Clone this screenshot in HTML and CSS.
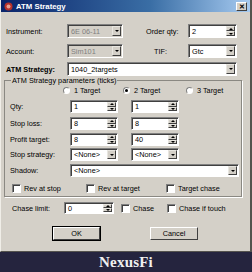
FILE: index.html
```html
<!DOCTYPE html>
<html><head><meta charset="utf-8"><link rel="stylesheet" href="styles.css"></head>
<body>
<div class="window">
  <div class="titlebar">
    <svg class="appicon" width="9" height="9" viewBox="0 0 9 9"><circle cx="4.5" cy="4.5" r="4" fill="#b8322a"/><circle cx="4.5" cy="4.5" r="2" fill="#e8a090"/></svg>
    <span class="title">ATM Strategy</span>
    <span class="close">✕</span>
  </div>
  <div class="row r1">
    <span class="lbl">Instrument:</span>
    <div class="combo dis w56"><span class="val">6E 06-11</span><span class="btn"><i class="down"></i></span></div>
    <span class="lbl2">Order qty:</span>
    <div class="spin w49"><span class="val">2</span><span class="sbtn"><span class="half"><i class="up"></i></span><span class="half"><i class="down"></i></span></span></div>
  </div>
  <div class="row r2">
    <span class="lbl">Account:</span>
    <div class="combo dis w56"><span class="val">Sim101</span><span class="btn"><i class="down"></i></span></div>
    <span class="lbl2 tif">TIF:</span>
    <div class="combo w49"><span class="val">Gtc</span><span class="btn"><i class="down"></i></span></div>
  </div>
  <div class="row r3">
    <span class="lbl bold">ATM Strategy:</span>
    <div class="combo w170"><span class="val">1040_2targets</span><span class="btn"><i class="down"></i></span></div>
  </div>
  <fieldset class="group">
    <legend>ATM Strategy parameters (ticks)</legend>
    <div class="row radios">
      <span class="radio rd1"><i class="circ"></i>1 Target</span>
      <span class="radio rd2"><i class="circ on"></i>2 Target</span>
      <span class="radio rd3"><i class="circ"></i>3 Target</span>
    </div>
    <div class="row prow m5">
      <span class="flbl">Qty:</span>
      <div class="spin w48"><span class="val">1</span><span class="sbtn"><span class="half"><i class="up"></i></span><span class="half"><i class="down"></i></span></span></div>
      <div class="spin w48 col2"><span class="val">1</span><span class="sbtn"><span class="half"><i class="up"></i></span><span class="half"><i class="down"></i></span></span></div>
    </div>
    <div class="row prow m4">
      <span class="flbl">Stop loss:</span>
      <div class="spin w48"><span class="val">8</span><span class="sbtn"><span class="half"><i class="up"></i></span><span class="half"><i class="down"></i></span></span></div>
      <div class="spin w48 col2"><span class="val">8</span><span class="sbtn"><span class="half"><i class="up"></i></span><span class="half"><i class="down"></i></span></span></div>
    </div>
    <div class="row prow m3">
      <span class="flbl">Profit target:</span>
      <div class="spin w48"><span class="val">8</span><span class="sbtn"><span class="half"><i class="up"></i></span><span class="half"><i class="down"></i></span></span></div>
      <div class="spin w48 col2"><span class="val">40</span><span class="sbtn"><span class="half"><i class="up"></i></span><span class="half"><i class="down"></i></span></span></div>
    </div>
    <div class="row prow m2">
      <span class="flbl">Stop strategy:</span>
      <div class="combo w48"><span class="val">&lt;None&gt;</span><span class="btn"><i class="down"></i></span></div>
      <div class="combo w48 col2"><span class="val">&lt;None&gt;</span><span class="btn"><i class="down"></i></span></div>
    </div>
    <div class="row prow m3">
      <span class="flbl">Shadow:</span>
      <div class="combo w169"><span class="val">&lt;None&gt;</span><span class="btn"><i class="down"></i></span></div>
    </div>
    <div class="row checks">
      <span class="check c1"><i class="box"></i>Rev at stop</span>
      <span class="check c2"><i class="box"></i>Rev at target</span>
      <span class="check c3"><i class="box"></i>Target chase</span>
    </div>
  </fieldset>
  <div class="row chase">
    <span class="clbl">Chase limit:</span>
    <div class="spin w50"><span class="val">0</span><span class="sbtn"><span class="half"><i class="up"></i></span><span class="half"><i class="down"></i></span></span></div>
    <span class="check c4"><i class="box"></i>Chase</span>
    <span class="check c5"><i class="box"></i>Chase if touch</span>
  </div>
  <div class="row buttons">
    <span class="button ok">OK</span>
    <span class="button cancel">Cancel</span>
  </div>
</div>
<div class="footer">NexusFi</div>
</body></html>
```
FILE: styles.css
```css
*{box-sizing:border-box}
html,body{margin:0;padding:0}
body{width:252px;height:272px;overflow:hidden;background:#25243e;font-family:"Liberation Sans",Arial,sans-serif;font-size:7.3px;color:#000}
.window{height:252px;background:#d4d0c8;border-left:1px solid #f0eee8;border-right:2px solid #55534e;border-bottom:1px solid #55534e;display:flex;flex-direction:column}
.titlebar{height:12px;flex:none;background:linear-gradient(90deg,#0a246a,#3a6ea5 60%,#a6caf0);display:flex;align-items:center;padding:0 2px 0 3px}
.appicon{flex:none}
.title{color:#fff;font-weight:bold;font-size:7.8px;margin-left:3px;flex:1}
.close{width:11px;height:9px;background:#d4d0c8;border:1px solid;border-color:#fff #404040 #404040 #fff;font-size:7px;font-weight:bold;line-height:7px;text-align:center;margin-right:1px}
.row{display:flex;align-items:center;flex:none}
.r1{height:14px;margin-top:12px;padding-left:5px}
.r2{height:14px;margin-top:6px;padding-left:5px}
.r3{height:14px;margin-top:4px;padding-left:5px}
.lbl{width:61px;flex:none}
.bold{font-weight:bold}
.lbl2{width:42px;margin-left:23px;flex:none}
.tif{padding-left:8px}
.combo,.spin{height:100%;background:#fff;border:1px solid;border-color:#808080 #fff #fff #808080;box-shadow:inset 1px 1px 0 #404040;display:flex;align-items:center;flex:none;padding:1px 1px 1px 2px}
.combo.dis{background:#d4d0c8;color:#808080}
.val{flex:1;padding-left:1px;white-space:nowrap;overflow:hidden}
.w56{width:56px}.w49{width:49px}.w170{width:170px}.w48{width:48px}.w169{width:169px}.w50{width:50px}
.btn{width:9px;height:100%;background:#d4d0c8;border:1px solid;border-color:#e8e6e0 #404040 #404040 #e8e6e0;display:flex;align-items:center;justify-content:center;flex:none}
.sbtn{width:9px;height:100%;display:flex;flex-direction:column;flex:none}
.half{flex:1;background:#d4d0c8;border:1px solid;border-color:#e8e6e0 #404040 #404040 #e8e6e0;display:flex;align-items:center;justify-content:center}
.down{width:0;height:0;border-left:2px solid transparent;border-right:2px solid transparent;border-top:2px solid #000}
.up{width:0;height:0;border-left:2px solid transparent;border-right:2px solid transparent;border-bottom:2px solid #000}
.group{margin:0 0 0 3px;width:238px;padding:0 0 2px 0;border:1px solid #8a8882;box-shadow:1px 1px 0 #fff;min-inline-size:0}
.group legend{padding:0 1px;margin-left:6px;line-height:9px;height:9px}
.radios{height:10px}
.radio{display:flex;align-items:center;flex:none}
.circ{width:7px;height:7px;border-radius:50%;background:#fff;border:1px solid;border-color:#808080 #fff #fff #808080;margin-right:4px;display:flex;align-items:center;justify-content:center}
.circ.on::after{content:"";width:3px;height:3px;border-radius:50%;background:#000}
.rd1{margin-left:58px;width:60px}
.rd2{width:63px}
.prow{height:13px;padding-left:5px}
.m5{margin-top:5px}.m4{margin-top:4px}.m3{margin-top:3px}.m2{margin-top:2px}
.flbl{width:60px;flex:none}
.col2{margin-left:13px}
.checks{height:11px;margin-top:6px}
.check{display:flex;align-items:center;flex:none}
.box{width:9px;height:9px;background:#fff;border:1px solid;border-color:#808080 #fff #fff #808080;box-shadow:inset 1px 1px 0 #404040;margin-right:3px;flex:none}
.c1{margin-left:7px;width:74px}
.c2{width:80px}
.chase{height:12px;margin-top:5px;padding-left:11px}
.clbl{width:52px;flex:none}
.c4{margin-left:7px;width:46px}
.buttons{height:13px;margin-top:13px;padding-left:52px}
.button{height:100%;display:flex;align-items:center;justify-content:center;background:#d4d0c8;border:1px solid;border-color:#fff #404040 #404040 #fff}
.ok{width:47px;outline:1px solid #000}
.cancel{width:48px;margin-left:50px}
.footer{height:20px;display:flex;align-items:center;justify-content:center;color:#f0f0f0;font-family:"Liberation Serif","Times New Roman",serif;font-weight:bold;font-size:15px;letter-spacing:0.2px}
```
